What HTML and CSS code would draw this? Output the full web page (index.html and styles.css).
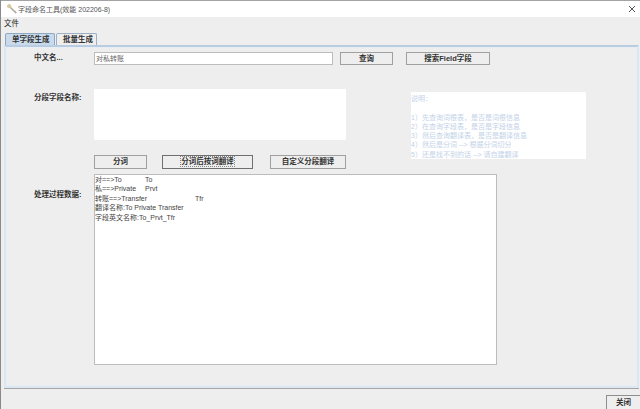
FILE: index.html
```html
<!DOCTYPE html>
<html lang="zh">
<head>
<meta charset="utf-8">
<title>字段命名工具</title>
<link rel="stylesheet" href="styles.css">
</head>
<body>
<div class="window">
  <header class="titlebar">
    <svg class="app-icon" width="12" height="12" viewBox="0 0 12 12"><path d="M3.5 3.5l5 5" stroke="#b3aa98" stroke-width="1.6"/><circle cx="3.2" cy="3.2" r="2.1" fill="#d9c9a0"/><path d="M8 9l2-0.5M9 10l1.5-0.5" stroke="#9a9a9a" stroke-width="1"/></svg>
    <span class="title-text">字段命名工具(效能 202206-8)</span>
    <svg class="close-icon" width="8" height="8" viewBox="0 0 8 8"><path d="M1 1l6 6M7 1l-6 6" stroke="#555" stroke-width="1"/></svg>
  </header>
  <nav class="menubar"><span>文件</span></nav>
  <div class="tabs">
    <span class="tab tab-active">单字段生成</span>
    <span class="tab">批量生成</span>
  </div>
  <main class="panel">
    <div class="row row-name">
      <label class="field-label">中文名...</label>
      <div class="input">对私转账</div>
      <button class="btn btn-query">查询</button>
      <button class="btn btn-search">搜索Field字段</button>
    </div>
    <div class="row row-segment">
      <label class="field-label label-segment">分段字段名称:</label>
      <div class="segment-col">
        <div class="segment-box"></div>
        <div class="actions">
          <button class="btn btn-split">分词</button>
          <button class="btn btn-translate"><span class="focus-text">分词后按词翻译</span></button>
          <button class="btn btn-custom">自定义分段翻译</button>
        </div>
      </div>
      <aside class="help">说明：

1）先查询词根表，是否是词根信息
2）在查询字段表，是否是字段信息
3）然后查询翻译表，是否是翻译信息
4）然后是分词 --&gt; 根据分词切分
5）还是找不到的话 --&gt; 请自建翻译</aside>
    </div>
    <div class="row row-output">
      <label class="field-label label-output">处理过程数据:</label>
      <pre class="output">对==&gt;To	To
私==&gt;Private	Prvt
转账==&gt;Transfer	Tfr
翻译名称:To Private Transfer
字段英文名称:To_Prvt_Tfr</pre>
    </div>
  </main>
  <footer class="footer"><button class="btn btn-close">关闭</button></footer>
</div>
</body>
</html>
```
FILE: styles.css
```css
* { box-sizing: border-box; }
html, body { margin: 0; height: 100%; overflow: hidden; }
body {
  background: #eeeeee;
  font-family: "Liberation Sans", "Noto Sans CJK SC", sans-serif;
  font-size: 7.5px;
  color: #333;
}
.window {
  width: 640px;
  height: 409px;
  display: flex;
  flex-direction: column;
  border-left: 1px solid #8a8a8a;
  overflow: hidden;
}
.titlebar {
  height: 17px;
  flex: none;
  background: #fff;
  border-top: 1px solid #a3a3a3;
  display: flex;
  align-items: center;
  padding: 0 5px 0 5px;
  color: #555;
}
.app-icon { flex: none; }
.title-text { flex: 1; font-size: 7px; }
.close-icon { flex: none; margin-right: -1px; }
.menubar {
  height: 16px;
  flex: none;
  padding: 2px 0 0 3px;
  font-size: 7.5px;
  line-height: 10px;
  color: #222;
}
.tabs {
  height: 12px;
  flex: none;
  display: flex;
  padding-left: 4px;
}
.tab {
  height: 12px;
  padding: 0 6px;
  width: 41px;
  font-weight: bold;
  font-size: 7.5px;
  line-height: 11px;
  color: #333;
  background: #eeeeee;
  border: 1px solid #9db0c4;
  border-bottom: none;
  border-radius: 2px 2px 0 0;
  margin-right: 1px;
  text-align: center;
  white-space: nowrap;
}
.tab-active {
  width: 50px;
  background: #c8daec;
  border-color: #8fa8c0;
}
.panel {
  height: 343px;
  flex: none;
  margin: 0 1px 0 3px;
  border: 2px solid #dde7f1;
  border-top: 2px solid #b9cce0;
  border-bottom: 2px solid #dde7f1;
  box-shadow: 0 1px 0 #a6a6a6, inset 0 0 0 1px #e8eef5;
  padding-top: 5px;
  display: flex;
  flex-direction: column;
}
.row { display: flex; align-items: flex-start; }
.field-label {
  width: 60px;
  flex: none;
  margin-left: 28px;
  font-weight: bold;
  font-size: 7.5px;
  white-space: nowrap;
  line-height: 10px;
  color: #333;
}
.row-name { height: 37px; }
.row-name .field-label { padding-top: 1px; }
.input {
  width: 239px;
  height: 13px;
  background: #fff;
  border: 1px solid #bcbcbc;
  font-size: 7px;
  line-height: 11px;
  padding-left: 1px;
  color: #666;
}
.btn {
  background: #eeeeee;
  border: 1px solid #a0a0a0;
  font-family: inherit;
  font-weight: bold;
  font-size: 7.5px;
  color: #333;
  padding: 0;
  height: 13px;
  line-height: 10px;
  white-space: nowrap;
}
.btn-query { width: 53px; margin-left: 7px; }
.btn-search { width: 84px; margin-left: 13px; }
.label-segment { padding-top: 4px; }
.segment-col { width: 252px; flex: none; }
.segment-box { height: 51px; background: #fff; }
.actions { display: flex; margin-top: 15px; width: 252px; }
.actions .btn { height: 14px; }
.btn-split { width: 53px; }
.btn-translate { width: 91px; margin-left: 15px; border-color: #6f6f6f; flex: none; }
.focus-text { outline: 1px dotted #888; outline-offset: 0; }
.btn-custom { width: 76px; margin-left: 17px; flex: none; }
.help {
  width: 175px;
  height: 67px;
  margin: 3px 0 0 65px;
  background: #fff;
  font-size: 7px;
  line-height: 9.3px;
  color: #c3d2e8;
  white-space: pre;
  padding-top: 2px;
  overflow: hidden;
}
.row-output { margin-top: 5px; }
.label-output { padding-top: 16px; }
.output {
  width: 403px;
  height: 191px;
  margin: 0;
  background: #fff;
  border: 1px solid #bcbcbc;
  font-family: inherit;
  font-size: 7px;
  line-height: 9.4px;
  tab-size: 50px;
  color: #444;
  padding-top: 0;
}
.footer {
  flex: 1;
  display: flex;
  justify-content: flex-end;
  align-items: flex-start;
  padding-top: 7px;
}
.btn-close {
  width: 34px;
  height: 20px;
  padding-bottom: 6px;
  border-color: #8f8f8f;
  border-right: none;
  border-bottom: none;
}
```
